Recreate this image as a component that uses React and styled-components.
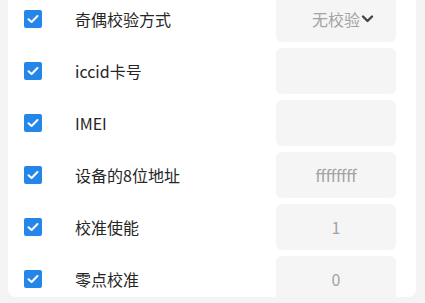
import React from 'react';
import styled, { createGlobalStyle } from 'styled-components';

const GlobalStyle = createGlobalStyle`
  html, body {
    margin: 0;
    padding: 0;
    background: #f4f4f4;
    font-family: "Noto Sans CJK SC", "Noto Sans", sans-serif;
  }
`;

const Page = styled.div`
  padding: 0 9px 6px 8px;
`;

const Card = styled.div`
  height: 297px;
  background: #ffffff;
  border-radius: 0 0 8px 8px;
  overflow: hidden;
`;

const List = styled.div`
  margin-top: -7px;
  display: flex;
  flex-direction: column;
`;

const Row = styled.div`
  display: grid;
  grid-template-columns: 18px 1fr 120px;
  column-gap: 33px;
  align-items: center;
  height: 52px;
  padding: 0 20px 0 16px;
`;

const Check = styled.span`
  width: 18px;
  height: 18px;
  border-radius: 2px;
  background: #2586ea;
  display: flex;
  align-items: center;
  justify-content: center;
`;

const Label = styled.span`
  font-size: 16px;
  color: #262626;
  white-space: nowrap;
`;

const Field = styled.div`
  height: 46px;
  border-radius: 6px;
  background: #f5f5f5;
  display: flex;
  align-items: center;
  justify-content: center;
  font-size: 16px;
  color: #a3a3a3;
`;

const SelectText = styled.span`
  position: relative;
`;

const Chevron = styled.svg`
  position: absolute;
  left: 100%;
  top: 50%;
  margin-top: -5px;
  margin-left: 1px;
`;

const CheckIcon = () => (
  <svg width="12" height="10" viewBox="0 0 12 10">
    <path d="M1.5 5.2 L4.6 8 L10.5 2" fill="none" stroke="#fff" strokeWidth="2" strokeLinecap="round" strokeLinejoin="round" />
  </svg>
);

const rows = [
  { label: '奇偶校验方式', value: '无校验', select: true },
  { label: 'iccid卡号', value: '' },
  { label: 'IMEI', value: '' },
  { label: '设备的8位地址', value: 'ffffffff' },
  { label: '校准使能', value: '1' },
  { label: '零点校准', value: '0' },
];

const App = () => (
  <Page>
    <GlobalStyle />
    <Card>
      <List>
        {rows.map((r) => (
          <Row key={r.label}>
            <Check>
              <CheckIcon />
            </Check>
            <Label>{r.label}</Label>
            <Field>
              {r.select ? (
                <SelectText>
                  {r.value}
                  <Chevron width="13" height="10" viewBox="0 0 13 10">
                    <path d="M2 2.5 L6.5 7 L11 2.5" fill="none" stroke="#444" strokeWidth="2.4" strokeLinecap="round" strokeLinejoin="round" />
                  </Chevron>
                </SelectText>
              ) : (
                r.value
              )}
            </Field>
          </Row>
        ))}
      </List>
    </Card>
  </Page>
);

export default App;
